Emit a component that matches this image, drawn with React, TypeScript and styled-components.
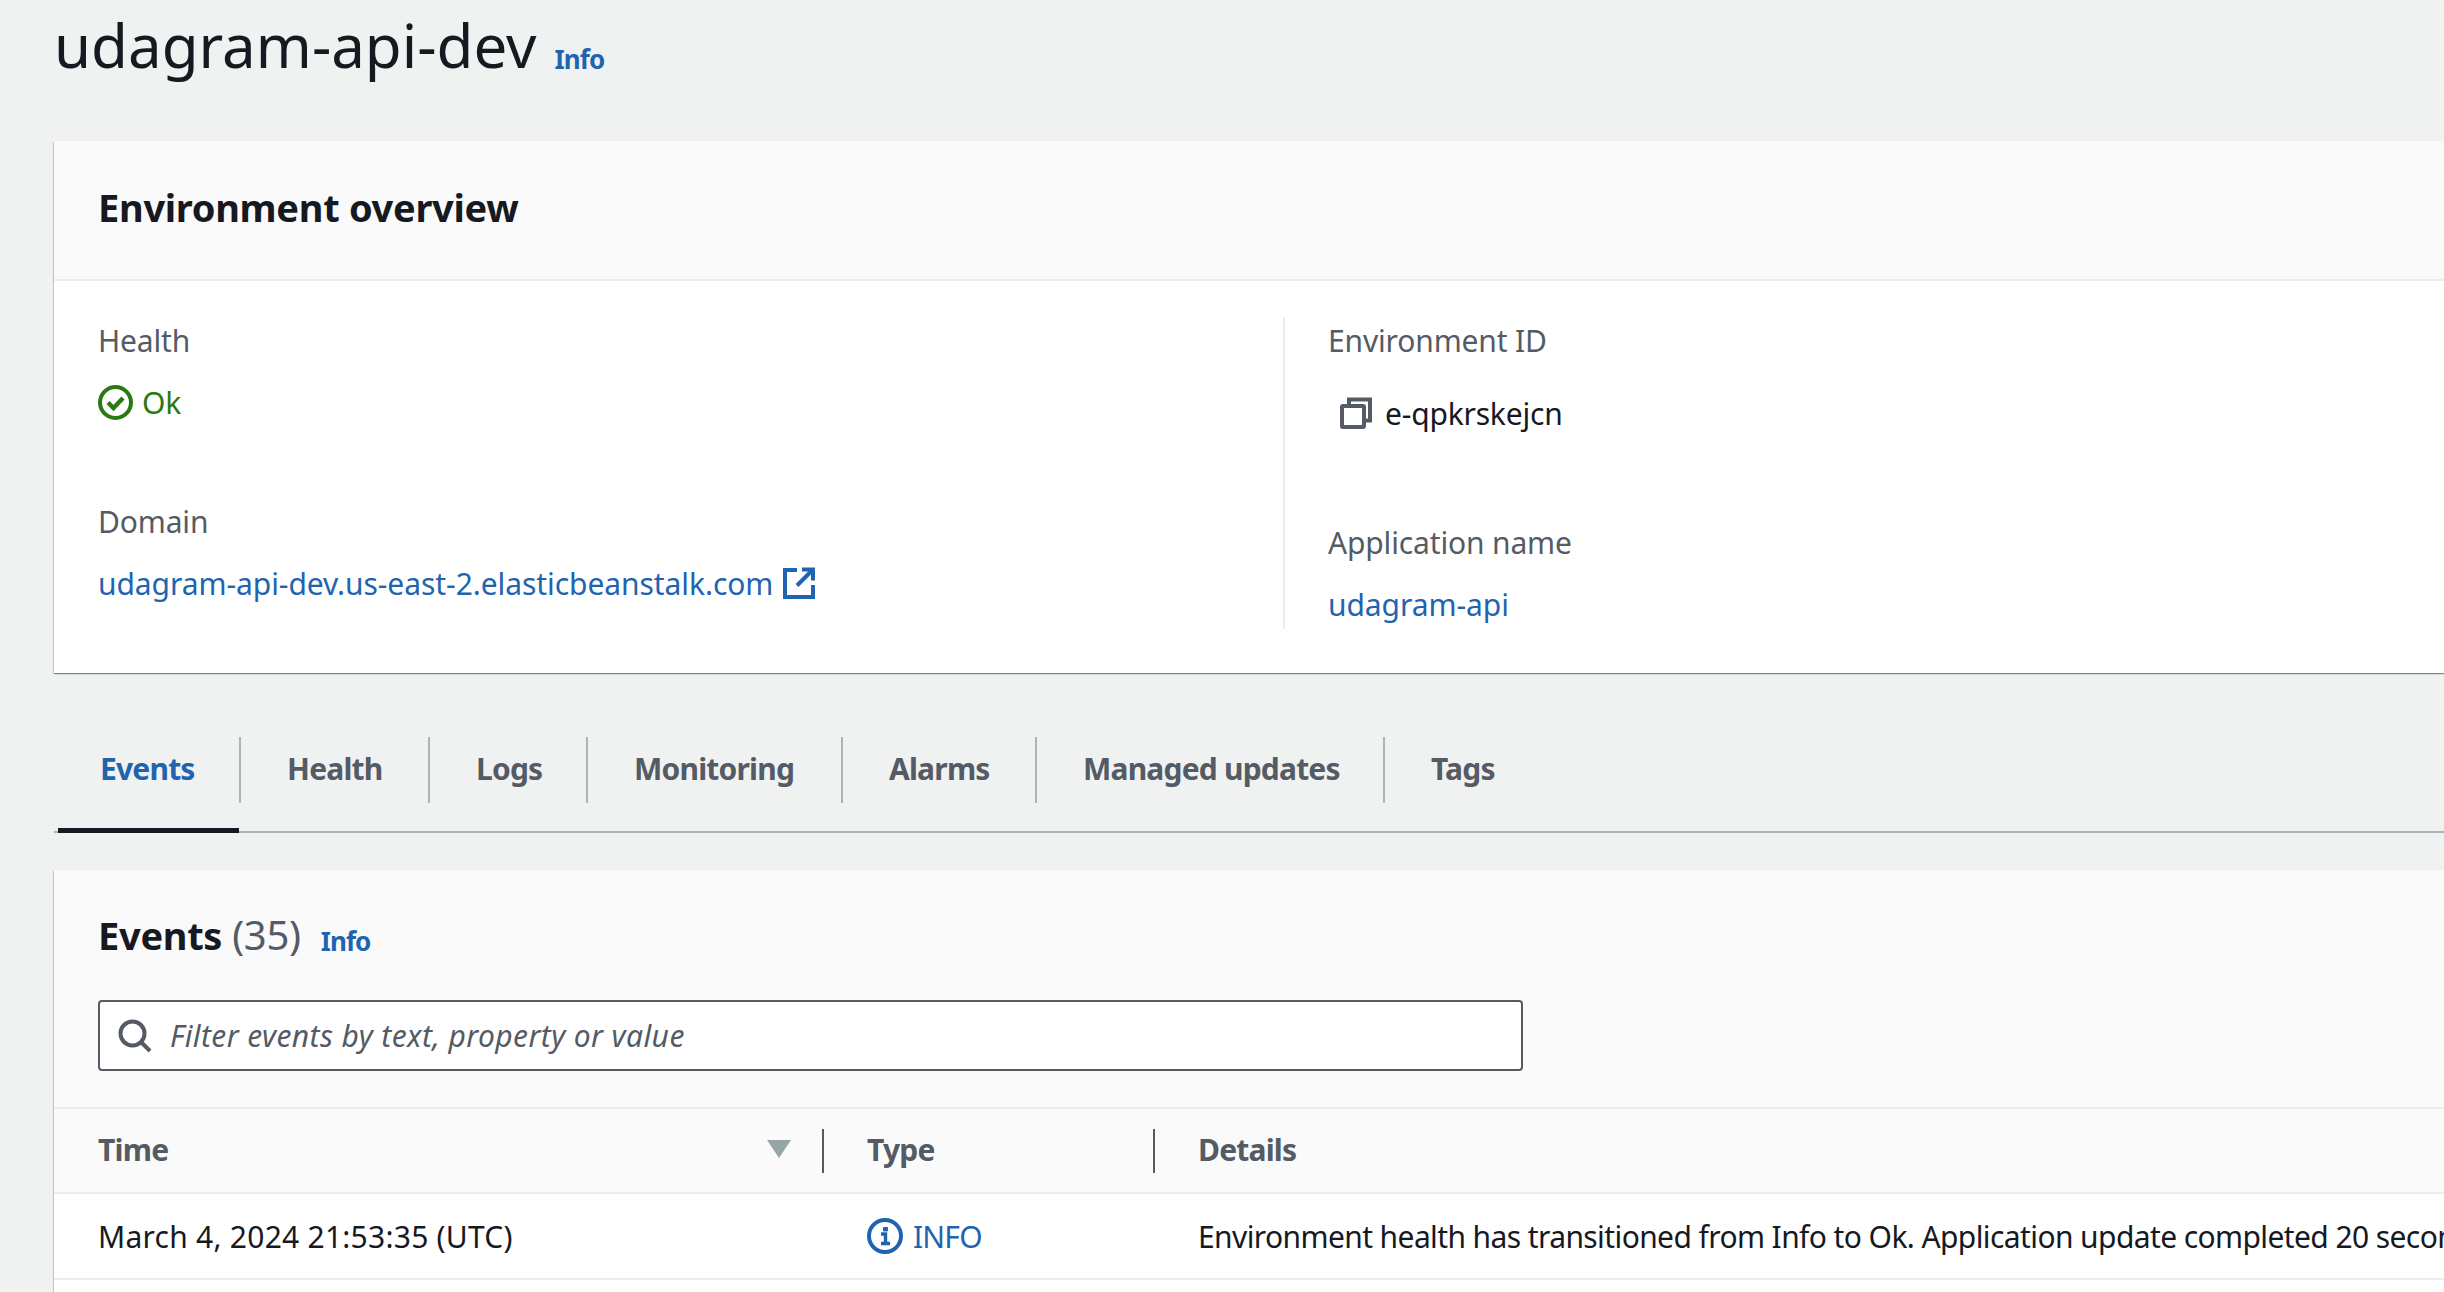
import styled, { createGlobalStyle } from 'styled-components';

const GlobalStyle = createGlobalStyle`
  html, body {
    margin: 0;
    padding: 0;
    width: 2444px;
    height: 1292px;
    overflow: hidden;
    background: #f0f2f2;
    font-family: "Noto Sans", "Open Sans", sans-serif;
    color: #16191f;
  }
`;

const Page = styled.div`
  width: 2444px;
  height: 1292px;
  overflow: hidden;
  padding-left: 54px;
  box-sizing: border-box;
`;

const TitleRow = styled.div`
  height: 141px;
  display: flex;
  align-items: flex-start;
  gap: 18px;
`;

const Title = styled.h1`
  margin: 7px 0 0;
  font-size: 60px;
  line-height: 76px;
  font-weight: 400;
`;

const InfoLink = styled.a<{ $top: number }>`
  margin-top: ${(p) => p.$top}px;
  color: #1f64b0;
  font-size: 26px;
  line-height: 36px;
  font-weight: 700;
  letter-spacing: -0.9px;
`;

const Card = styled.section`
  width: 2600px;
  background: #fff;
  box-shadow: 0 1px 1px 0 rgba(0, 28, 36, 0.3), 1px 1px 1px 0 rgba(0, 28, 36, 0.15), -1px 1px 1px 0 rgba(0, 28, 36, 0.15);
`;

const CardHeader = styled.header`
  height: 138px;
  padding: 0 44px;
  display: flex;
  align-items: center;
  background: #fafafa;
  border-bottom: 2px solid #eaeded;
`;

const CardTitle = styled.h2`
  margin: 0;
  font-size: 38px;
  line-height: 48px;
  font-weight: 700;
  letter-spacing: -0.3px;
`;

const OverviewTitle = styled(CardTitle)`
  margin-top: -6px;
`;

const Overview = styled.div`
  height: 392px;
  padding: 36px 0 0 44px;
  box-sizing: border-box;
  display: flex;
`;

const Column = styled.div<{ $divided?: boolean }>`
  width: ${(p) => (p.$divided ? '900px' : '1185px')};
  height: 312px;
  box-sizing: border-box;
  ${(p) => p.$divided && 'border-left: 2px solid #eaeded; padding-left: 43px;'}
`;

const Label = styled.div<{ $gap?: number }>`
  height: 48px;
  line-height: 48px;
  margin-top: ${(p) => p.$gap ?? 0}px;
  font-size: 30px;
  color: #545b64;
  letter-spacing: -0.15px;
`;

const ValueRow = styled.div<{ $top: number; $indent?: number }>`
  display: flex;
  align-items: center;
  height: 48px;
  margin-top: ${(p) => p.$top}px;
  margin-left: ${(p) => p.$indent ?? 0}px;
  font-size: 30px;
  letter-spacing: -0.07px;
`;

const OkText = styled.span`
  color: #2a7a14;
  margin-left: 9px;
`;

const Link = styled.a`
  color: #1f64b0;
`;

const ExternalIcon = styled.svg`
  margin-left: 10px;
  flex: none;
`;

const CopyIcon = styled.svg`
  margin-right: 13px;
  flex: none;
`;

const CopyValue = styled.span`
  letter-spacing: -0.2px;
`;

const TabBar = styled.nav`
  margin-top: 64px;
  height: 96px;
  width: 2600px;
  box-sizing: border-box;
  padding-left: 4px;
  display: flex;
  align-items: flex-start;
  border-bottom: 2px solid #aab7b8;
`;

const Tab = styled.div<{ $active?: boolean; $first?: boolean; $width: number }>`
  position: relative;
  height: 96px;
  width: ${(p) => p.$width}px;
  flex: none;
  box-sizing: border-box;
  display: flex;
  align-items: center;
  padding: 0 0 33px ${(p) => (p.$first ? 42 : 46)}px;
  font-size: 30px;
  font-weight: 700;
  letter-spacing: -0.8px;
  color: ${(p) => (p.$active ? '#1f64b0' : '#545b64')};
  ${(p) =>
    p.$active &&
    `&::before {
      content: '';
      position: absolute;
      left: 0;
      right: 2px;
      bottom: 0;
      height: 5px;
      background: #16191f;
    }`}
  &::after {
    content: '';
    position: absolute;
    right: 0;
    top: 0;
    height: 66px;
    width: 2px;
    background: #aab7b8;
  }
  &:last-child::after {
    display: none;
  }
`;

const EventsCard = styled(Card)`
  margin-top: 37px;
  background: #fafafa;
`;

const EventsHeader = styled.div`
  height: 237px;
  padding: 0 44px;
  box-sizing: border-box;
`;

const EventsHeading = styled.div`
  height: 130px;
  display: flex;
  align-items: flex-start;
  padding-top: 41px;
  box-sizing: border-box;
  gap: 20px;
`;

const Count = styled.span`
  font-weight: 400;
  font-size: 40px;
  color: #545b64;
  margin-left: 10px;
`;

const FilterBox = styled.div`
  width: 1425px;
  height: 71px;
  box-sizing: border-box;
  display: flex;
  align-items: center;
  gap: 18px;
  padding-left: 18px;
  background: #fff;
  border: 2px solid #545b64;
  border-radius: 4px;
`;

const Placeholder = styled.span`
  font-size: 30px;
  font-style: italic;
  letter-spacing: 0.4px;
  color: #545b64;
`;

const TableRow = styled.div<{ $head?: boolean }>`
  display: grid;
  grid-template-columns: 769px 331px 1400px;
  align-items: center;
  box-sizing: border-box;
  height: ${(p) => (p.$head ? 85 : 88)}px;
  padding-left: 44px;
  padding-bottom: ${(p) => (p.$head ? 3 : 0)}px;
  font-size: 30px;
  white-space: nowrap;
  background: ${(p) => (p.$head ? '#fafafa' : '#fff')};
  border-top: 2px solid #eaeded;
  ${(p) => !p.$head && 'border-bottom: 2px solid #eaeded;'}
`;

const TableBody = styled.div`
  background: #fff;
  padding-bottom: 60px;
`;

const TimeCell = styled.div`
  letter-spacing: 0.25px;
`;

const DetailCell = styled.div`
  letter-spacing: -0.6px;
`;

const HeadCell = styled.div<{ $divided?: boolean }>`
  position: relative;
  font-weight: 700;
  letter-spacing: -0.8px;
  color: #545b64;
  display: flex;
  align-items: center;
  justify-content: space-between;
  ${(p) =>
    p.$divided &&
    `&::before {
      content: '';
      position: absolute;
      left: -45px;
      top: 0;
      height: 44px;
      width: 2px;
      background: #545b64;
    }`}
`;

const SortCaret = styled.svg`
  margin-right: 76px;
`;

const InfoCell = styled.div`
  display: flex;
  align-items: center;
  gap: 10px;
  color: #1f64b0;
  letter-spacing: -0.8px;
`;

function OkIcon() {
  return (
    <svg width="35" height="35" viewBox="0 0 35 35" fill="none" stroke="#2a7a14" strokeWidth="4">
      <circle cx="17.5" cy="17.5" r="15.5" />
      <path d="M10 17.5l5.5 5.5 9.5-10" strokeWidth="4.4" />
    </svg>
  );
}

function InfoIcon() {
  return (
    <svg width="36" height="36" viewBox="0 0 36 36" fill="none" stroke="#1f64b0" strokeWidth="4">
      <circle cx="18" cy="18" r="16" />
      <path d="M14 16h4.500v9M14 25.500h9" strokeWidth="3.400" />
      <path d="M16.500 9.500h4v3.500h-4z" fill="#1f64b0" strokeWidth="1" />
    </svg>
  );
}

export default function App() {
  const tabs = [
    { label: 'Events', width: 183 },
    { label: 'Health', width: 189 },
    { label: 'Logs', width: 158 },
    { label: 'Monitoring', width: 255 },
    { label: 'Alarms', width: 194 },
    { label: 'Managed updates', width: 348 },
    { label: 'Tags', width: 150 },
  ];

  return (
    <Page>
      <GlobalStyle />
      <TitleRow>
        <Title>udagram-api-dev</Title>
        <InfoLink $top={41}>Info</InfoLink>
      </TitleRow>

      <Card>
        <CardHeader>
          <OverviewTitle>Environment overview</OverviewTitle>
        </CardHeader>
        <Overview>
          <Column>
            <Label>Health</Label>
            <ValueRow $top={13}>
              <OkIcon />
              <OkText>Ok</OkText>
            </ValueRow>
            <Label $gap={72}>Domain</Label>
            <ValueRow $top={13}>
              <Link>udagram-api-dev.us-east-2.elasticbeanstalk.com</Link>
              <ExternalIcon width="32" height="32" viewBox="0 0 32 32" fill="none" stroke="#1f64b0" strokeWidth="4">
                <path d="M14 3H2v27h28V18" />
                <path d="M19 2.500h11v11M30 2.500L14 18.500" />
              </ExternalIcon>
            </ValueRow>
          </Column>
          <Column $divided>
            <Label>Environment ID</Label>
            <ValueRow $top={24} $indent={12}>
              <CopyIcon width="32" height="32" viewBox="0 0 32 32" fill="none" stroke="#545b64" strokeWidth="4">
                <path d="M9 9V2.500h21v21h-6.500" />
                <rect x="2" y="9" width="22" height="21" rx="1" />
              </CopyIcon>
              <CopyValue>e-qpkrskejcn</CopyValue>
            </ValueRow>
            <Label $gap={82}>Application name</Label>
            <ValueRow $top={13}>
              <Link>udagram-api</Link>
            </ValueRow>
          </Column>
        </Overview>
      </Card>

      <TabBar>
        {tabs.map((tab, i) => (
          <Tab key={tab.label} $active={i === 0} $first={i === 0} $width={tab.width}>
            {tab.label}
          </Tab>
        ))}
      </TabBar>

      <EventsCard>
        <EventsHeader>
          <EventsHeading>
            <CardTitle>
              Events<Count>(35)</Count>
            </CardTitle>
            <InfoLink $top={12}>Info</InfoLink>
          </EventsHeading>
          <FilterBox>
            <svg width="34" height="34" viewBox="0 0 34 34" fill="none" stroke="#545b64" strokeWidth="4">
              <circle cx="14.500" cy="14.500" r="12" />
              <path d="M23 23l9 9" />
            </svg>
            <Placeholder>Filter events by text, property or value</Placeholder>
          </FilterBox>
        </EventsHeader>
        <TableRow $head>
          <HeadCell>
            Time
            <SortCaret width="24" height="18" viewBox="0 0 24 18">
              <path d="M0 0h24L12 18z" fill="#95a5a6" />
            </SortCaret>
          </HeadCell>
          <HeadCell $divided>Type</HeadCell>
          <HeadCell $divided>Details</HeadCell>
        </TableRow>
        <TableBody>
          <TableRow>
            <TimeCell>March 4, 2024 21:53:35 (UTC)</TimeCell>
            <InfoCell>
              <InfoIcon />
              INFO
            </InfoCell>
            <DetailCell>Environment health has transitioned from Info to Ok. Application update completed 20 seconds ago and took 2 minutes.</DetailCell>
          </TableRow>
        </TableBody>
      </EventsCard>
    </Page>
  );
}
